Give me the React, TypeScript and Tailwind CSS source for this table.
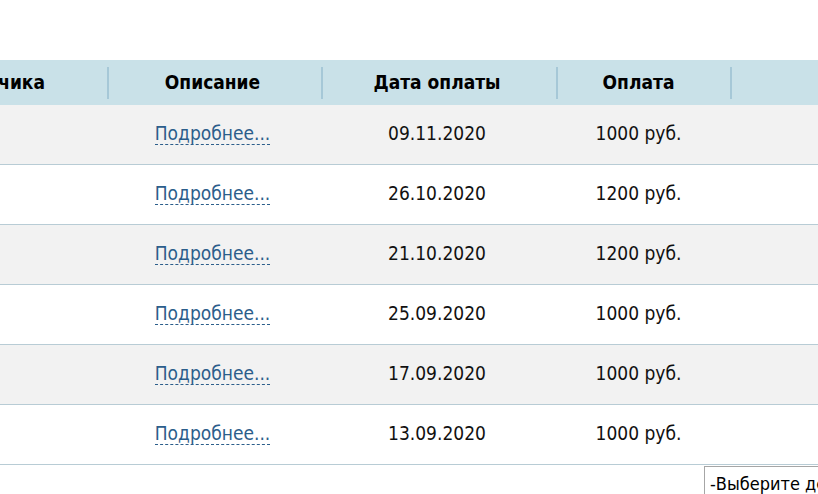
import React from "react";

const rows = [
  { date: "09.11.2020", sum: "1000 руб." },
  { date: "26.10.2020", sum: "1200 руб." },
  { date: "21.10.2020", sum: "1200 руб." },
  { date: "25.09.2020", sum: "1000 руб." },
  { date: "17.09.2020", sum: "1000 руб." },
  { date: "13.09.2020", sum: "1000 руб." },
];

function Sep() {
  return <div className="w-[2px] h-[32px] bg-[#a6c8d7] shrink-0" />;
}

export default function App() {
  return (
    <div className="w-[818px] h-[494px] overflow-hidden bg-white font-['DejaVu_Sans_Condensed','DejaVu_Sans',sans-serif] text-[19px] text-[#111]">
      <div className="pt-[60px] w-[818px] overflow-hidden">
        <div className="ml-[-192px] w-[1350px]">
          {/* header */}
          <div className="flex h-[45px] bg-[#c9e1e8] items-center font-bold text-black">
            <div className="flex w-[301px] shrink-0 items-center">
              <div className="flex-1 text-right pr-[62px] whitespace-nowrap">ФИО заказчика</div>
              <Sep />
            </div>
            <div className="flex w-[214px] shrink-0 items-center">
              <div className="flex-1 text-center pr-[5px]">Описание</div>
              <Sep />
            </div>
            <div className="flex w-[235px] shrink-0 items-center">
              <div className="flex-1 text-center pr-[5px]">Дата оплаты</div>
              <Sep />
            </div>
            <div className="flex w-[174px] shrink-0 items-center">
              <div className="flex-1 text-center pr-[11px]">Оплата</div>
              <Sep />
            </div>
            <div className="w-[300px] shrink-0" />
          </div>
          {/* rows */}
          {rows.map((r, i) => (
            <div
              key={i}
              className={`flex h-[60px] items-center border-b border-[#b8ccd5] pb-[3px] ${
                i % 2 === 0 ? "bg-[#f2f2f2]" : "bg-white"
              }`}
            >
              <div className="w-[301px] shrink-0" />
              <div className="w-[214px] shrink-0 text-center pr-[7px]">
                <span className="text-[#2c5e8b] border-b border-dashed border-[#2c5e8b] leading-[22px]">
                  Подробнее...
                </span>
              </div>
              <div className="w-[235px] shrink-0 text-center pr-[7px]">{r.date}</div>
              <div className="w-[174px] shrink-0 text-center pr-[13px]">{r.sum}</div>
              <div className="w-[300px] shrink-0" />
            </div>
          ))}
        </div>
        <div className="mt-px ml-[704px] w-[200px] h-[40px] border border-[#a6a6a6] pl-[5px] pt-[3px] text-[18px] text-black whitespace-nowrap">
          -Выберите день
        </div>
      </div>
    </div>
  );
}
